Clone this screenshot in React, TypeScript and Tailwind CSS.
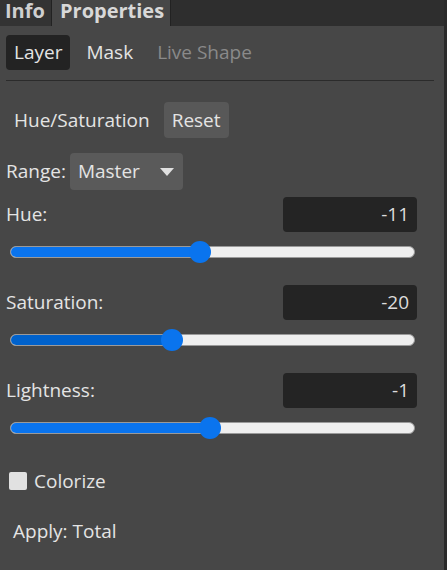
import React from "react";

type SliderProps = { label: string; value: number; min: number; max: number; fill: string };

function SliderField({ label, value, min, max, fill }: SliderProps) {
  const pct = ((value - min) / (max - min)) * 100;
  return (
    <div className="flex flex-col">
      <div className="flex items-center justify-between pl-[6px] pr-[27px] h-[35px]">
        <span>{label}</span>
        <div className="w-[134px] h-[35px] rounded-[4px] bg-[#242424] flex items-center justify-end pr-[8px] text-[#dcdcdc]">
          {value}
        </div>
      </div>
      {/* slider */}
      <div className="relative mt-[9px] ml-[10px] mr-[29px] h-[22px] flex items-center">
        <div className="w-full h-[12px] rounded-full bg-[#efefef] border border-[#9a9a9a] overflow-hidden">
          <div className={`h-full ${fill}`} style={{ width: `${pct}%` }} />
        </div>
        <div
          className="absolute top-0 w-[22px] h-[22px] rounded-full bg-[#0a74ee] -ml-[11px]"
          style={{ left: `${pct}%` }}
        />
      </div>
    </div>
  );
}

export default function App() {
  return (
    <div
      className="w-[447px] h-[570px] flex bg-[#474747] text-[19px] text-[#e4e4e4] overflow-hidden"
      style={{ fontFamily: '"Open Sans", "Noto Sans", sans-serif' }}
    >
      <div className="flex-1 flex flex-col">
        {/* tabs */}
        <div className="h-[26px] flex bg-[#2e2e2e] shrink-0">
          <div className="w-[52px] h-full bg-[#333333] border-r border-[#222] pl-[5px] font-bold text-[20px] text-[#cfcfcf] leading-[22px]">
            Info
          </div>
          <div className="w-[119px] h-full bg-[#474747] border-r border-[#222] pl-[8px] font-bold text-[20px] text-[#d8d8d8] leading-[22px]">
            Properties
          </div>
        </div>

        {/* sub tabs */}
        <div className="flex items-center gap-[8px] mt-[9px] pl-[6px]">
          <div className="h-[35px] px-[8px] rounded-[4px] bg-[#232323] flex items-center">Layer</div>
          <div className="h-[35px] px-[8px] flex items-center">Mask</div>
          <div className="h-[35px] px-[8px] flex items-center text-[#8a8a8a]">Live Shape</div>
        </div>
        <div className="mt-[10px] ml-[6px] mr-[10px] h-px bg-[#2b2b2b]" />

        {/* header row */}
        <div className="flex items-center gap-[14px] mt-[21px] pl-[14px]">
          <span>Hue/Saturation</span>
          <div className="h-[36px] px-[8px] rounded-[4px] bg-[#585858] flex items-center">Reset</div>
        </div>

        {/* range */}
        <div className="flex items-center gap-[4px] mt-[15px] pl-[6px]">
          <span>Range:</span>
          <div className="w-[113px] h-[37px] rounded-[4px] bg-[#5a5a5a] flex items-center justify-between pl-[8px] pr-[9px]">
            <span>Master</span>
            <svg width="14" height="8" viewBox="0 0 14 8">
              <path d="M0 0 L14 0 L7 8 Z" fill="#e0e0e0" />
            </svg>
          </div>
        </div>

        <div className="mt-[7px] flex flex-col gap-[22px]">
          <SliderField label="Hue:" value={-11} min={-180} max={180} fill="bg-[#0a74ee]" />
          <SliderField label="Saturation:" value={-20} min={-100} max={100} fill="bg-[#0062cc]" />
          <SliderField label="Lightness:" value={-1} min={-100} max={100} fill="bg-[#0a74ee]" />
        </div>

        {/* colorize */}
        <div className="flex items-center gap-[7px] mt-[28px] pl-[9px]">
          <div className="w-[18px] h-[18px] rounded-[2px] bg-[#e1e1e1]" />
          <span>Colorize</span>
        </div>

        <div className="mt-[21px] pl-[13px]">Apply: Total</div>
      </div>
      <div className="w-[3px] h-full bg-[#2a2a2a]" />
    </div>
  );
}
